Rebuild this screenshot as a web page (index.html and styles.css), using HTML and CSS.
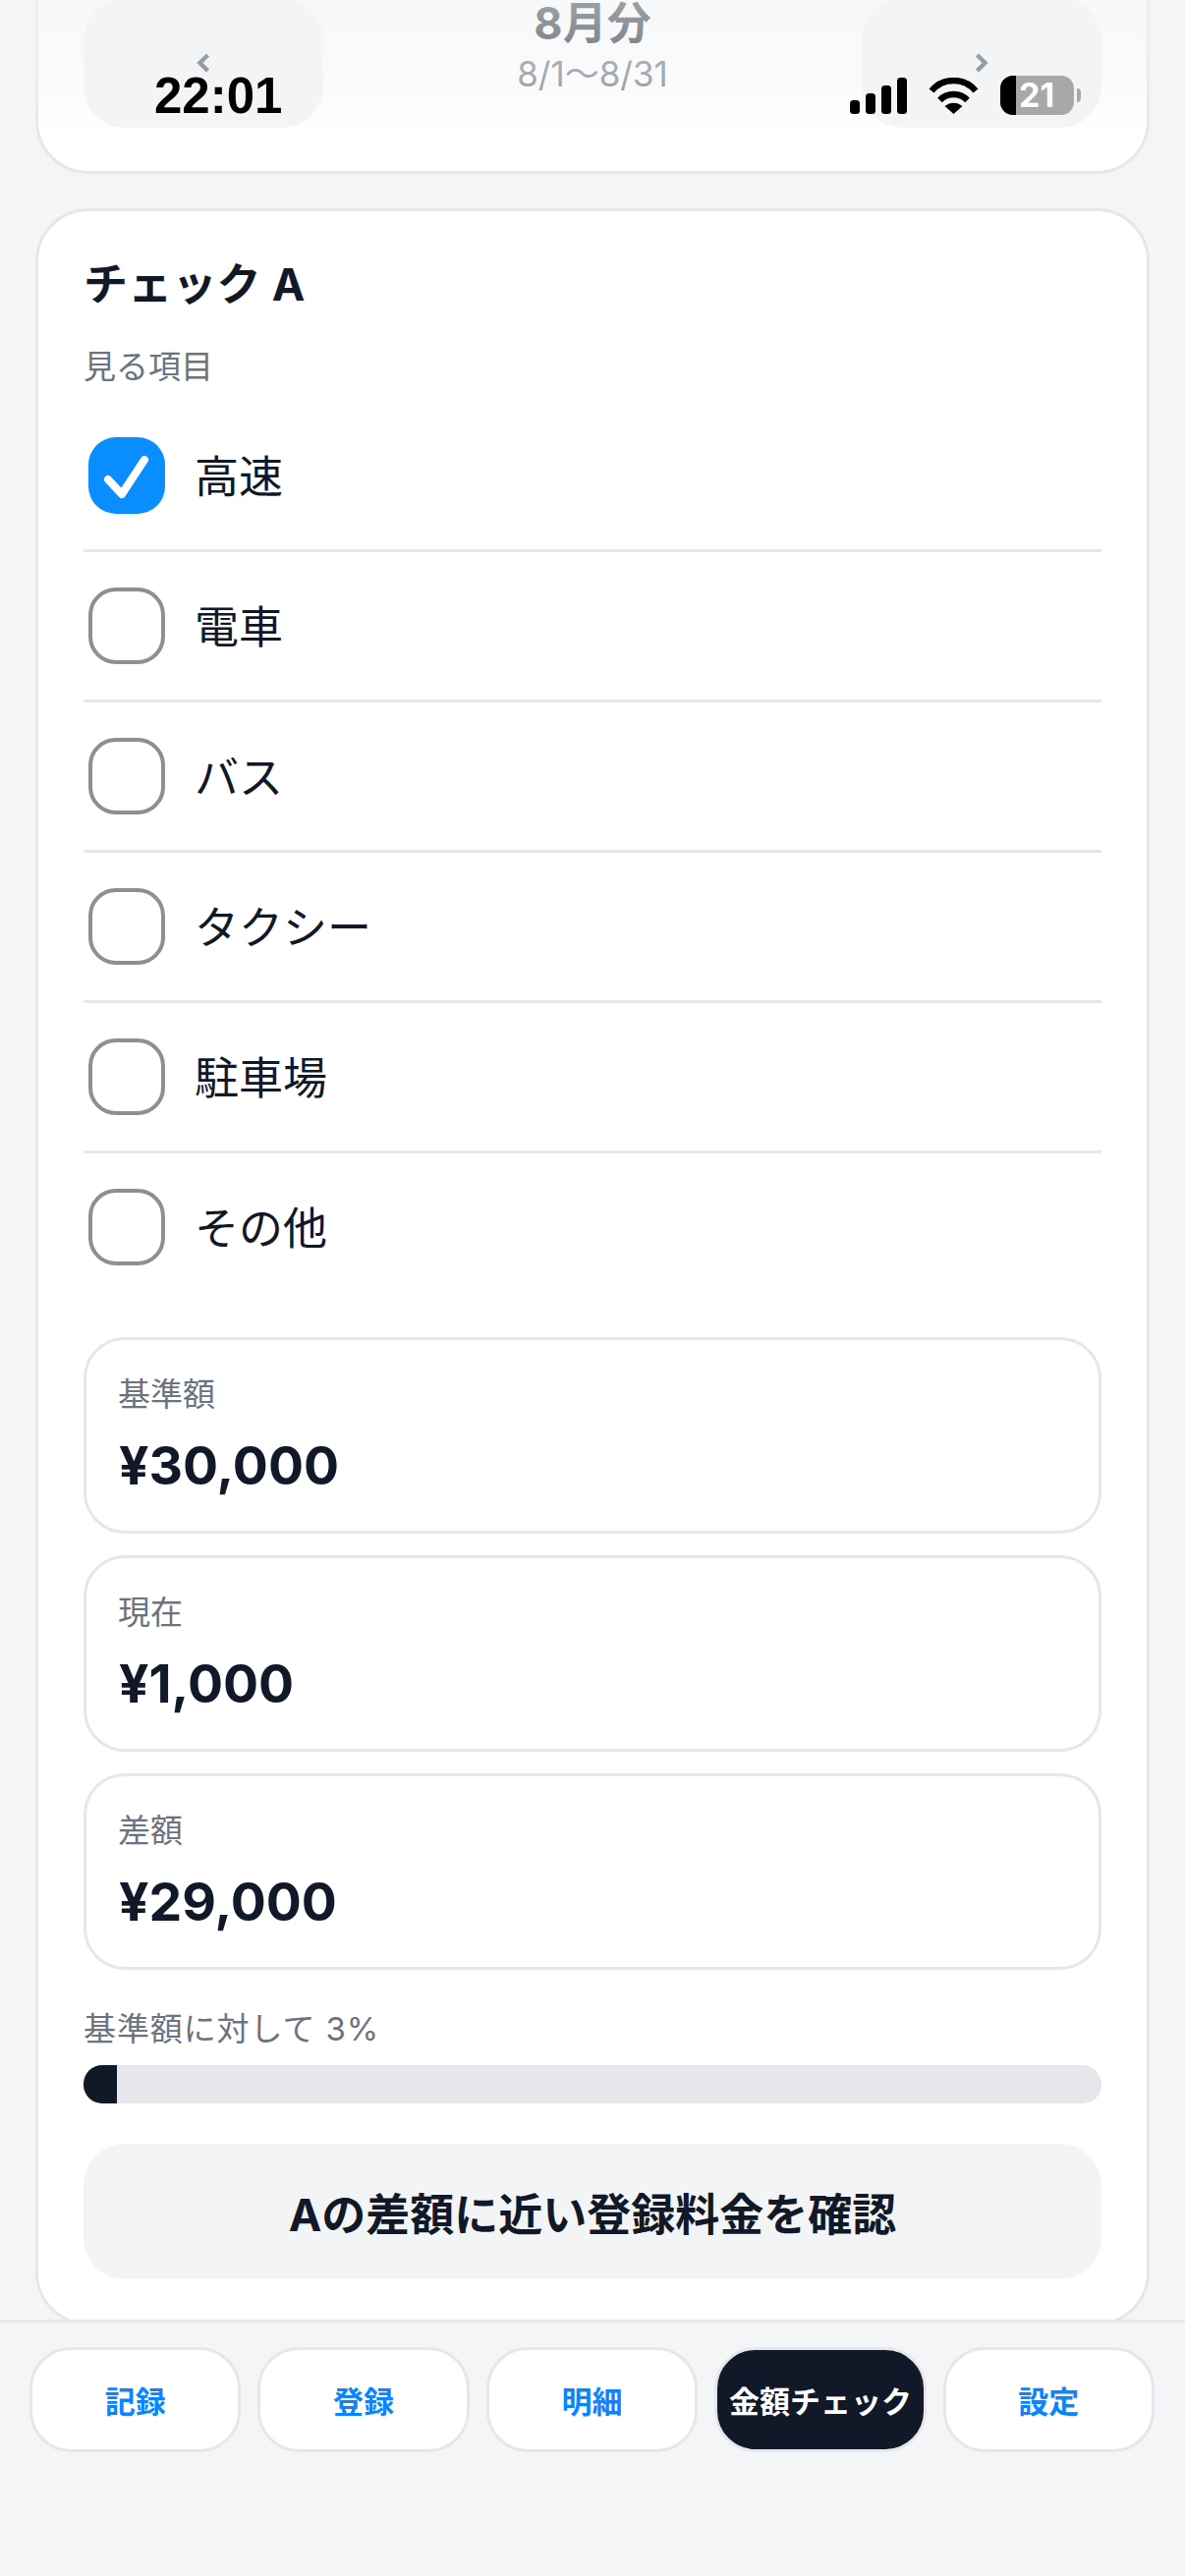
FILE: index.html
```html
<!DOCTYPE html>
<html lang="ja">
<head>
<meta charset="utf-8">
<title>金額チェック</title>
<link rel="stylesheet" href="styles.css">
</head>
<body>
<div class="page">
  <main class="content">
    <section class="card month-card">
      <button class="month-btn"><svg class="chev" viewBox="0 0 14 20"><path d="M11.500 2 3.500 10l8 8"/></svg></button>
      <div class="month-center">
        <div class="month-title">8月分</div>
        <div class="month-range">8/1〜8/31</div>
      </div>
      <button class="month-btn"><svg class="chev" viewBox="0 0 14 20"><path d="M2.500 2l8 8-8 8"/></svg></button>
    </section>

    <section class="card check-card">
      <h2 class="card-title">チェック A</h2>
      <div class="muted list-label">見る項目</div>
      <ul class="check-list">
        <li class="check-row"><span class="box box-on"><svg class="tick" viewBox="0 0 78 78"><path d="M20 43 34 58 57 23"/></svg></span><span class="row-text">高速</span></li>
        <li class="check-row"><span class="box"></span><span class="row-text">電車</span></li>
        <li class="check-row"><span class="box"></span><span class="row-text">バス</span></li>
        <li class="check-row"><span class="box"></span><span class="row-text">タクシー</span></li>
        <li class="check-row"><span class="box"></span><span class="row-text">駐車場</span></li>
        <li class="check-row"><span class="box"></span><span class="row-text">その他</span></li>
      </ul>
      <div class="metrics">
        <div class="metric"><div class="muted">基準額</div><div class="metric-value">¥30,000</div></div>
        <div class="metric"><div class="muted">現在</div><div class="metric-value">¥1,000</div></div>
        <div class="metric"><div class="muted">差額</div><div class="metric-value">¥29,000</div></div>
      </div>
      <div class="muted progress-label">基準額に対して 3%</div>
      <div class="progress"><div class="progress-fill" style="width:3.33%"></div></div>
      <button class="action">Aの差額に近い登録料金を確認</button>
    </section>
  </main>

  <nav class="tabs">
    <a class="tab">記録</a>
    <a class="tab">登録</a>
    <a class="tab">明細</a>
    <a class="tab tab-active">金額チェック</a>
    <a class="tab">設定</a>
  </nav>

  <div class="top-fade"></div>
  <div class="status">
    <span class="clock">22:01</span>
    <div class="status-icons">
      <svg class="signal" viewBox="0 0 58 37"><rect x="0" y="23" width="10" height="14" rx="3.500"/><rect x="16" y="16" width="10" height="21" rx="3.500"/><rect x="32" y="8" width="10" height="29" rx="3.500"/><rect x="48" y="0" width="10" height="37" rx="3.500"/></svg>
      <svg class="wifi" viewBox="0 0 51 37"><path class="wifi-arc" d="M3 13.500C15-.5 36-.5 48 13.500"/><path class="wifi-arc" d="M11.500 23C19 15 32 15 39.500 23"/><path d="M16.500 29C22 24.500 29 24.500 34.500 29L25.500 37Z"/></svg>
      <div class="battery"><div class="battery-level"></div><span class="battery-num">21</span></div>
      <span class="battery-nub"></span>
    </div>
  </div>
</div>
</body>
</html>
```

FILE: styles.css
```css
* { box-sizing: border-box; }
html, body { margin: 0; padding: 0; }
body {
  font-family: Inter, "Noto Sans CJK JP", sans-serif;
  color: #111827;
  background: #f4f5f7;
}
.page {
  position: relative;
  width: 1206px;
  height: 2622px;
  display: flex;
  flex-direction: column;
  overflow: hidden;
}
.content {
  flex: 1;
  min-height: 0;
  overflow: hidden;
  padding: 0 36px;
  display: flex;
  flex-direction: column;
  gap: 35px;
}
.card {
  flex: none;
  background: #fff;
  border: 3px solid #e5e7eb;
  border-radius: 54px;
}
.month-card {
  margin-top: -49px;
  padding: 44px 46px;
  display: flex;
  justify-content: space-between;
}
.month-btn {
  width: 244px;
  height: 132px;
  border: 0;
  padding: 0;
  background: #f3f4f6;
  border-radius: 42px;
  display: flex;
  align-items: center;
  justify-content: center;
}
.chev { width: 14px; height: 20px; }
.chev path { fill: none; stroke: #4b5563; stroke-width: 4.500; }
.month-center { text-align: center; padding-top: 2px; }
.month-title { font-size: 45px; line-height: 47px; font-weight: 700; }
.month-range { font-size: 35px; line-height: 44px; margin-top: 6px; color: #6b7280; }

.check-card { padding: 44px 46px; }
.card-title { margin: 0; font-size: 45px; line-height: 62px; font-weight: 700; letter-spacing: .2px; }
.muted { font-size: 33px; line-height: 44px; color: #6b7280; }
.list-label { margin-top: 30px; }
.check-list { list-style: none; margin: 14px 0 0; padding: 0; }
.check-row {
  height: 153px;
  border-bottom: 3px solid #e5e7eb;
  display: flex;
  align-items: center;
  gap: 30px;
  padding-left: 5px;
  font-size: 45px;
}
.check-row:last-child { border-bottom: 0; height: 150px; }
.row-text { padding-bottom: 4px; }
.box {
  width: 78px;
  height: 78px;
  border: 4px solid #8e8e93;
  border-radius: 28px;
  flex: none;
  display: block;
}
.box-on { background: #0a8dff; border: 0; }
.tick { display: block; width: 78px; height: 78px; }
.tick path { fill: none; stroke: #fff; stroke-width: 8; stroke-linecap: round; stroke-linejoin: round; }

.metrics { margin-top: 37px; display: flex; flex-direction: column; gap: 22px; }
.metric {
  height: 200px;
  border: 3px solid #e5e7eb;
  border-radius: 42px;
  padding: 33px 32px 0;
}
.metric-value { margin: 19px 0 0 1px; font-size: 53.500px; line-height: 64px; font-weight: 700; }
.progress-label { margin-top: 38px; letter-spacing: .9px; }
.progress {
  margin-top: 15px;
  height: 39px;
  background: #e5e7eb;
  border-radius: 19px;
  overflow: hidden;
}
.progress-fill { height: 100%; background: #111827; }
.action {
  display: block;
  width: 100%;
  height: 138px;
  margin-top: 41px;
  border: 0;
  border-radius: 42px;
  background: #f3f4f6;
  color: #111827;
  font: 700 45px Inter, "Noto Sans CJK JP", sans-serif;
}

.tabs {
  flex: none;
  height: 261px;
  background: #f4f5f7;
  border-top: 3px solid #e5e7eb;
  padding: 25px 31px 0 30px;
  display: flex;
  gap: 17px;
  align-items: flex-start;
}
.tab {
  flex: 1;
  height: 107px;
  display: flex;
  align-items: center;
  justify-content: center;
  background: #fff;
  border: 3px solid #e5e7eb;
  border-radius: 42px;
  color: #0a84ff;
  font-size: 31px;
  font-weight: 700;
  white-space: nowrap;
}
.tab-active { background: #111827; color: #fff; }

.top-fade {
  position: absolute;
  left: 0;
  top: 0;
  width: 100%;
  height: 140px;
  background: linear-gradient(to bottom, rgba(243,244,246,.62), rgba(243,244,246,.4) 60%, rgba(243,244,246,0));
}
.status { position: absolute; left: 0; top: 0; width: 100%; }
.clock {
  position: absolute;
  left: 157px;
  top: 68px;
  font: 700 51px/60px "Liberation Sans", sans-serif;
  color: #000;
}
.status-icons { position: absolute; left: 865px; top: 77px; width: 240px; height: 40px; }
.signal { position: absolute; left: 0; top: 2px; width: 58px; height: 37px; fill: #000; }
.wifi { position: absolute; left: 80px; top: 2px; width: 51px; height: 37px; fill: #000; }
.wifi-arc { fill: none; stroke: #000; stroke-width: 6.500; }
.battery {
  position: absolute;
  left: 153px;
  top: 0;
  width: 75px;
  height: 40px;
  border-radius: 13px;
  background: #a8a8a8;
  overflow: hidden;
}
.battery-level { width: 16px; height: 100%; background: #000; }
.battery-num {
  position: absolute;
  left: 19px;
  top: 0;
  font: 700 34px/40px Inter, sans-serif;
  color: #fff;
}
.battery-nub {
  position: absolute;
  left: 231px;
  top: 13px;
  width: 4px;
  height: 14px;
  background: #a8a8a8;
  border-radius: 0 4px 4px 0;
}
```
